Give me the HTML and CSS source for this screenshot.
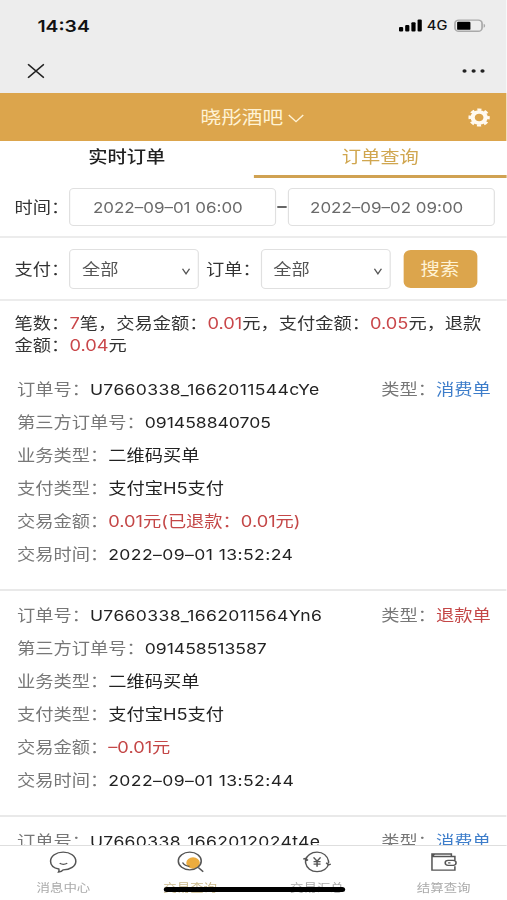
FILE: index.html
```html
<!DOCTYPE html>
<html lang="zh-CN">
<head>
    <meta charset="UTF-8">
    <meta name="viewport" content="width=device-width, initial-scale=1.0">
    <title>订单查询</title>
    <link rel="stylesheet" href="styles.css">
</head>
<body>
    <div class="phone">
        <div class="status">
            <span class="clock">14:34</span>
            <div class="signals">
                <svg class="bars" viewBox="0 0 20 13">
                    <rect x="0" y="8" width="3.6" height="4.6" rx="1"/>
                    <rect x="5.3" y="6" width="3.6" height="6.6" rx="1"/>
                    <rect x="10.6" y="3.3" width="3.6" height="9.3" rx="1"/>
                    <rect x="15.9" y="0.4" width="3.6" height="12.2" rx="1"/>
                </svg>
                <span class="net">4G</span>
                <svg class="battery" viewBox="0 0 28 14">
                    <rect x="0.9" y="0.9" width="24" height="11.6" rx="3.4" fill="none" stroke="#a9a9a9" stroke-width="1.5"/>
                    <rect x="2.8" y="2.6" width="11.8" height="8.4" rx="1" fill="#000"/>
                    <path d="M26.3 4.7v4q1.4-.6 1.4-2t-1.4-2z" fill="#a9a9a9"/>
                </svg>
            </div>
        </div>

        <div class="nav">
            <svg class="close" viewBox="0 0 16 16"><path d="M1 1l14 14M15 1L1 15"/></svg>
            <svg class="more" viewBox="0 0 20 4"><circle cx="2" cy="2" r="1.8"/><circle cx="9.8" cy="2" r="1.8"/><circle cx="17.4" cy="2" r="1.8"/></svg>
        </div>

        <header class="header">
            <div class="shop">晓彤酒吧
                <svg class="arrow" viewBox="0 0 14 9"><path d="M.8 1l6.2 6.6L13.2 1"/></svg>
            </div>
            <svg class="gear" viewBox="0 0 24 24">
                <circle cx="12" cy="12" r="7" stroke-width="4.6"/>
                <circle cx="12" cy="12" r="10" stroke-width="3" stroke-dasharray="4.4 3.454" stroke-dashoffset="2.2"/>
            </svg>
        </header>

        <div class="tabs">
            <div class="tab">实时订单</div>
            <div class="tab active">订单查询</div>
        </div>

        <!-- Filters -->
        <div class="filter time">
            <span class="name">时间：</span>
            <div class="box date">2022–09–01 06:00</div>
            <span class="dash"></span>
            <div class="box date">2022–09–02 09:00</div>
        </div>
        <div class="filter kinds">
            <span class="name">支付：</span>
            <div class="box select">全部<svg class="caret" viewBox="0 0 8 7"><path d="M1 .8l3 5 3-5"/></svg></div>
            <span class="name second">订单：</span>
            <div class="box select">全部<svg class="caret" viewBox="0 0 8 7"><path d="M1 .8l3 5 3-5"/></svg></div>
            <button class="search">搜索</button>
        </div>

        <main class="content">
            <p class="summary">笔数：<em>7</em>笔，交易金额：<em>0.01</em>元，支付金额：<em>0.05</em>元，退款金额：<em>0.04</em>元</p>

            <section class="order first">
                <div class="row"><label>订单号：</label><span class="num code">U7660338_1662011544cYe</span><div class="type"><label>类型：</label><span class="blue">消费单</span></div></div>
                <div class="row"><label>第三方订单号：</label><span class="num">091458840705</span></div>
                <div class="row"><label>业务类型：</label><span>二维码买单</span></div>
                <div class="row"><label>支付类型：</label><span>支付宝H5支付</span></div>
                <div class="row"><label>交易金额：</label><span class="red">0.01元(已退款：0.01元)</span></div>
                <div class="row"><label>交易时间：</label><span class="num stamp">2022–09–01 13:52:24</span></div>
            </section>

            <section class="order">
                <div class="row"><label>订单号：</label><span class="num code">U7660338_1662011564Yn6</span><div class="type"><label>类型：</label><span class="red">退款单</span></div></div>
                <div class="row"><label>第三方订单号：</label><span class="num">091458513587</span></div>
                <div class="row"><label>业务类型：</label><span>二维码买单</span></div>
                <div class="row"><label>支付类型：</label><span>支付宝H5支付</span></div>
                <div class="row"><label>交易金额：</label><span class="red">–0.01元</span></div>
                <div class="row"><label>交易时间：</label><span class="num stamp">2022–09–01 13:52:44</span></div>
            </section>

            <section class="order">
                <div class="row"><label>订单号：</label><span class="num code">U7660338_1662012024t4e</span><div class="type"><label>类型：</label><span class="blue">消费单</span></div></div>
            </section>
        </main>

        <footer class="tabbar">
            <div class="item">
                <svg viewBox="0 0 24 22"><path d="M8.3 18C4 17 1.2 14 1.2 10.2 1.2 5.2 6 1.2 12 1.2s10.8 4 10.8 9-4.8 8.600-10.800 8.600q-1.300 2-4 2.200.8-1.500.3-3z"/><path d="M9 12.300q3 2 6.500 0"/></svg>
                <span>消息中心</span>
            </div>
            <div class="item active">
                <svg viewBox="0 0 24 22"><circle class="sun" cx="14" cy="12" r="5.8"/><ellipse cx="11.2" cy="10" rx="9.8" ry="8.8"/><path d="M5 11.5q2 3.500 6 3.900"/><path d="M18.5 16.500l4.200 4.300"/></svg>
                <span>交易查询</span>
            </div>
            <div class="item">
                <svg viewBox="0 0 24 22"><path d="M2.200 9C3 4.500 7 1.200 12 1.200c5 0 9 3.500 9.800 9v2.300M21.800 13c-.8 4.500-4.800 7.600-9.800 7.600S3 17 2.200 12V8.500M.200 8.200l2-1 2 2.300M19.800 11.800l2 2.200 2-.8"/><path d="M9 6.300l3 3.900 3-3.900M12 10.200v5.600M9 10.600h6M9 13.200h6"/></svg>
                <span>交易汇总</span>
            </div>
            <div class="item">
                <svg viewBox="0 0 24 22"><path d="M21.800 9V5.500H2.200v13.700h19.600v-4M2.200 5.500V3h16.600v2.500M2.200 5.500L4.500 3"/><rect x="13.500" y="9.300" width="9.300" height="5" rx="2.500"/><path d="M16 11.800h2"/></svg>
                <span>结算查询</span>
            </div>
            <div class="home-line"></div>
        </footer>
    </div>
</body>
</html>
```

FILE: styles.css
```css
* {
    box-sizing: border-box;
    margin: 0;
    padding: 0;
}

body {
    background: #fff;
    overflow: hidden;
}

/* everything is set wide: 433px of layout fills the 507px screen */
.phone {
    width: 433.4px;
    height: 900px;
    transform: scaleX(1.17);
    transform-origin: 0 0;
    display: flex;
    flex-direction: column;
    overflow: hidden;
    font-family: Inter, "Noto Sans CJK SC", sans-serif;
    font-size: 15.6px;
    color: #333;
}

.phone > * {
    flex-shrink: 0;
}

svg {
    display: block;
    fill: none;
}

.status {
    height: 51px;
    padding: 0 18px 0 32px;
    background: #ededed;
    display: flex;
    align-items: center;
    justify-content: space-between;
    color: #111;
}

.clock {
    font-size: 16.5px;
    font-weight: 600;
}

.signals {
    display: flex;
    align-items: center;
}

.bars {
    width: 20px;
    height: 13px;
    fill: #000;
}

.net {
    font-size: 12.5px;
    font-weight: 500;
    margin: 0 6px 0 4px;
}

.battery {
    width: 27px;
    height: 14px;
}

.nav {
    height: 42px;
    padding: 0 18.5px 2px 22.5px;
    background: #ededed;
    display: flex;
    align-items: center;
    justify-content: space-between;
}

.close {
    width: 15.5px;
    height: 16px;
    stroke: #222;
    stroke-width: 1.5;
}

.more {
    width: 20px;
    height: 4px;
    fill: #222;
}

.header {
    height: 48px;
    background: #dca54c;
    display: grid;
    grid-template-columns: 1fr auto 1fr;
    align-items: center;
    color: #fff3d5;
}

.shop {
    grid-column: 2;
    display: flex;
    align-items: center;
    gap: 4px;
    margin-right: 2px;
    padding-top: 2px;
    font-size: 17.7px;
    line-height: 24px;
}

.arrow {
    width: 14px;
    height: 9px;
    stroke: #fff3d5;
    stroke-width: 1.2;
}

.gear {
    justify-self: end;
    width: 19px;
    height: 19px;
    margin-right: 14px;
    stroke: #fffaf0;
}

.tabs {
    height: 37px;
    display: flex;
}

.tab {
    flex: 1;
    font-size: 16.5px;
    font-weight: 500;
    line-height: 33px;
    text-align: center;
    color: #222;
}

.tab.active {
    color: #d0a64f;
    font-weight: 400;
    border-bottom: 3px solid #d0a252;
}

.filter {
    display: flex;
    align-items: center;
    padding-left: 12.5px;
    border-bottom: 2px solid #ececec;
}

.time {
    height: 60px;
}

.kinds {
    height: 63px;
}

.name {
    width: 46.5px;
    padding-bottom: 2px;
    white-space: nowrap;
}

.second {
    margin-left: 6px;
}

.box {
    border: 1px solid #e0e0e0;
    border-radius: 4px;
    color: #6a6a6a;
}

.date {
    width: 177px;
    height: 38px;
    line-height: 37px;
    text-align: center;
    font-size: 14.5px;
    padding-right: 8px;
}

.dash {
    width: 8px;
    height: 2px;
    margin: 0 1px;
    background: #666;
}

.select {
    width: 111px;
    height: 40px;
    padding: 0 6px 2px 10px;
    display: flex;
    align-items: center;
    justify-content: space-between;
    color: #555;
}

.caret {
    width: 8px;
    height: 7px;
    margin-top: 7px;
    stroke: #555;
    stroke-width: 1.2;
}

.search {
    width: 63px;
    height: 38px;
    margin-left: 11px;
    padding-bottom: 2px;
    border: none;
    border-radius: 6px;
    background: #dca54c;
    color: #fff3d5;
    font-family: inherit;
    font-size: 16.5px;
}

.content {
    flex: 1 1 0;
    min-height: 0;
    overflow: hidden;
}

.summary {
    padding: 12px 12.5px 0;
    line-height: 22px;
}

em {
    font-style: normal;
    color: #c9474a;
}

.order {
    height: 226px;
    padding: 8px 14px 0 14.5px;
    border-top: 2px solid #e9e9e9;
}

.first {
    height: 232px;
    padding-top: 16px;
    border-top: none;
}

.row {
    height: 33.1px;
    display: flex;
    align-items: center;
    line-height: 24px;
    white-space: nowrap;
    color: #222;
}

.row label {
    color: #777;
}

.num {
    font-size: 15px;
}

.code {
    letter-spacing: 0.3px;
}

.stamp {
    letter-spacing: 0.36px;
}

.type {
    margin-left: auto;
    display: flex;
}

.row .red {
    color: #c44747;
}

.row .blue {
    color: #3d7dca;
}

.tabbar {
    height: 55px;
    position: relative;
    display: flex;
    background: #fff;
    border-top: 1px solid #dedede;
}

.item {
    flex: 1;
    display: flex;
    flex-direction: column;
    align-items: center;
    padding-top: 5px;
    font-size: 11.5px;
    line-height: 18px;
    color: #aaa;
}

.item svg {
    width: 24px;
    height: 22px;
    margin-bottom: 6px;
    stroke: #555;
    stroke-width: 1.3;
}

.item.active {
    color: #c9b88a;
}

.item .sun {
    fill: #ecac3e;
    stroke: none;
}

.home-line {
    position: absolute;
    left: 139.5px;
    bottom: 8px;
    width: 155px;
    height: 5px;
    border-radius: 3px;
    background: #000;
}
```
